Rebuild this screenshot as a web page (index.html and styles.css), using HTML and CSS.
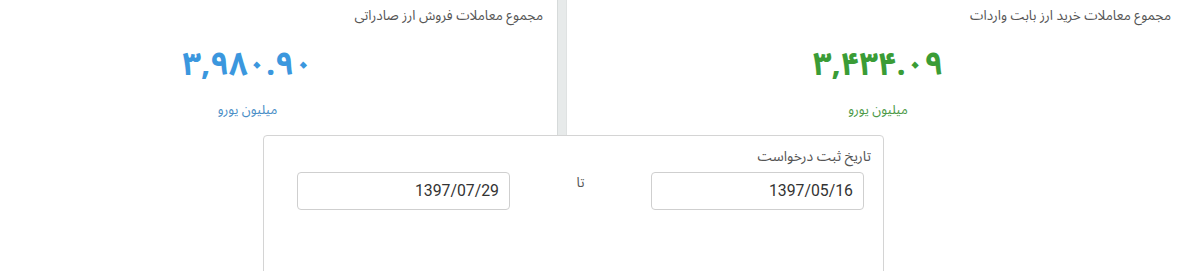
FILE: index.html
```html
<!DOCTYPE html>
<html lang="fa" dir="rtl">
<head>
<meta charset="utf-8">
<link rel="stylesheet" href="styles.css">
</head>
<body>
<div class="top">
  <div class="panel panel-import">
    <div class="panel-title">مجموع معاملات خرید ارز بابت واردات</div>
    <div class="stat stat-import">
      <div class="stat-value green">۳,۴۳۴.۰۹</div>
      <div class="stat-unit green-light">میلیون یورو</div>
    </div>
  </div>
  <div class="divider"></div>
  <div class="panel panel-export">
    <div class="panel-title">مجموع معاملات فروش ارز صادراتی</div>
    <div class="stat stat-export">
      <div class="stat-value blue">۳,۹۸۰.۹۰</div>
      <div class="stat-unit blue-light">میلیون یورو</div>
    </div>
  </div>
</div>
<div class="card">
  <div class="card-label">تاریخ ثبت درخواست</div>
  <div class="range">
    <div class="date-input">1397/05/16</div>
    <div class="range-sep">تا</div>
    <div class="date-input">1397/07/29</div>
  </div>
</div>
</body>
</html>
```

FILE: styles.css
```css
html, body {
  margin: 0;
  padding: 0;
  background: #ffffff;
}
body {
  direction: rtl;
  font-family: "Noto Sans Arabic", "DejaVu Sans", sans-serif;
  width: 1181px;
  height: 271px;
  overflow: hidden;
}
.top {
  display: flex;
  height: 135px;
}
.panel {
  display: flex;
  flex-direction: column;
}
.panel-import {
  width: 614px;
}
.panel-export {
  width: 557px;
}
.divider {
  width: 10px;
  box-sizing: border-box;
  background: #e7eaea;
  border-left: 1px solid #d6dada;
  border-right: 1px solid #dfe2e2;
}
.panel-title {
  font-size: 13.5px;
  color: #555555;
  padding-top: 5px;
  line-height: 22px;
}
.panel-import .panel-title {
  padding-right: 10px;
}
.panel-export .panel-title {
  padding-right: 14px;
}
.stat {
  display: flex;
  flex-direction: column;
  align-items: center;
}
.stat-import {
  padding-left: 8px;
}
.stat-export {
  padding-right: 62px;
}
.stat-value {
  font-weight: bold;
  font-size: 32.5px;
  line-height: 56px;
  margin-top: 10px;
}
.stat-unit {
  font-size: 13px;
  margin-top: 7px;
  line-height: 20px;
}
.green { color: #3a9c36; }
.green-light { color: #4c9a48; }
.blue { color: #3b97de; }
.blue-light { color: #4a8ec6; }

.card {
  margin-right: 297px;
  width: 621px;
  box-sizing: border-box;
  height: 160px;
  border: 1px solid #d4d4d4;
  border-radius: 4px;
  padding: 10px 12px 0 19px;
}
.card-label {
  font-size: 14px;
  color: #555555;
  line-height: 22px;
}
.range {
  display: flex;
  margin-top: 4px;
  padding-right: 7px;
}
.date-input {
  width: 213px;
  height: 38px;
  box-sizing: border-box;
  border: 1px solid #cfcfcf;
  border-radius: 4px;
  font-family: Roboto, "Liberation Sans", sans-serif;
  font-size: 15.8px;
  color: #333333;
  line-height: 36px;
  padding-right: 10px;
}
.range-sep {
  width: 141px;
  text-align: center;
  font-size: 13.5px;
  color: #555555;
  line-height: 22px;
}
```
